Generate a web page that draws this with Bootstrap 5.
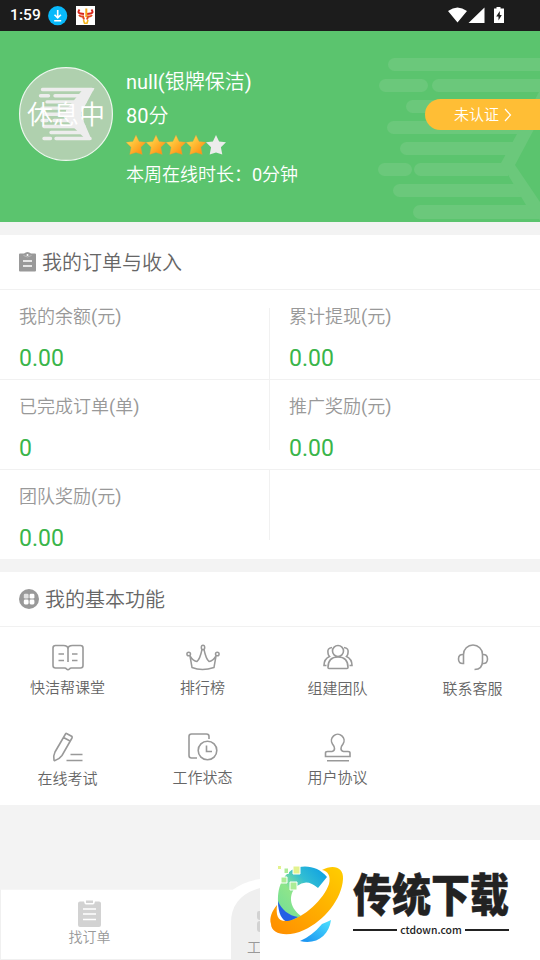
<!DOCTYPE html>
<html lang="zh-CN">
<head>
<meta charset="utf-8">
<meta name="viewport" content="width=device-width, initial-scale=1">
<title>我的</title>
<link href="https://cdn.jsdelivr.net/npm/bootstrap@5.3.0/dist/css/bootstrap.min.css" rel="stylesheet">
<style>
body{width:540px;height:960px;overflow:hidden;background:#f3f3f3;font-family:Roboto,"Noto Sans CJK SC DemiLight","Noto Sans CJK SC",sans-serif;font-weight:400;line-height:1;color:#666}
svg{display:block;flex:none}
.statusbar{height:31px;background:#1c1c1c;padding:0 35px 0 10px}
.clock{font-size:15.5px;font-weight:500;letter-spacing:.1px;width:38px;padding-top:1px}
.profile{height:191px;background:#5bc46e;padding:36px 0 0 19px}
.stripes{top:0;right:0}
.avatar{width:94px;height:94px}
.rest{font-size:26px;inset:0;padding-top:2px}
.who{font-size:20px;padding-left:13px}
.who>div{height:34px;line-height:34px;white-space:nowrap}
.who .nm{margin-top:-2px}
.who .online{font-size:18px;height:30px;line-height:30px;margin-top:5px}
.who .starrow{height:20px;margin-top:2px}
.verify{top:68px;right:0;width:115px;height:31px;border-radius:16px 0 0 16px;background:#ffbe35;font-size:15px;padding:1px 0 0 29px}
.panel{background:#fff;margin-top:13px}
.panel-title{height:55px;border-bottom:1px solid #f1f1f1;padding-left:19px;font-size:20px}
.panel-title span{padding:2px 0 0 6px}
.stat{height:90px;padding:14px 0 0 19px;font-size:18px;color:#999;position:relative}
.stat-row{border-bottom:1px solid #f1f1f1;height:90px}
.stat-row:last-child{height:89px;border:0}
.stat .lbl{line-height:26px}
.stat .val{font-size:23px;line-height:30px;color:#3ab54a;margin-top:14px}
.stat.split::after{content:"";position:absolute;right:0;top:0;width:1px;height:70px;background:#f1f1f1}
.stat.split.low::after{top:18px;height:71px}
.tool{height:90px;padding:15px 0 0;font-size:15px}
.tool span{line-height:22px;margin-top:5px}
.tool.dn span{margin-top:6px}
.tools{height:178px}
.tabs{height:71px;margin-top:84px;background:#fff;border:1px solid #f0f0f0;border-top-color:#f6f6f6}
.tab{width:177px;padding-top:10px;font-size:14px;color:#999}
.tab span{line-height:20px}
.bubble{left:220px;bottom:0}
.midtab{left:247px;bottom:4px;font-size:14px;line-height:18px;color:#999}
.brand{left:260px;top:840px;width:280px;height:120px;background:#fff;color:#222}
.brand-name{left:93px;top:36px;font:900 39px/32px "Noto Sans CJK SC",sans-serif;transform:scaleY(1.16);white-space:nowrap;-webkit-text-stroke:.4px #222}
.brand-site{left:93px;top:84px;width:156px;font:500 10.4px/12px "Noto Sans CJK SC",sans-serif;gap:3px}
.rule{height:2px;background:#222}
</style>
<script src="https://cdn.jsdelivr.net/npm/bootstrap@5.3.0/dist/js/bootstrap.bundle.min.js"></script>
</head>
<body class="position-relative">
<header class="statusbar d-flex align-items-center text-white">
  <span class="clock">1:59</span>
  <svg width="20" height="20" viewBox="0 0 20 20"><circle cx="9.700" cy="9.700" r="9.600" fill="#08b9fb"/><path d="M9.700 4v8M6.500 8.700l3.200 3.200 3.200-3.200M6.200 14.700h7" fill="none" stroke="#fff" stroke-width="1.600"/></svg>
  <svg class="ms-2" width="19" height="19" viewBox="0 0 19 19"><path fill="#fff" d="M0 0h19v19H0z"/><path d="M3.500 3.500Q1 7 4.500 7.500L8 8M15.500 3.500Q18 7 14.500 7.500L11 8" fill="none" stroke="#d8261c" stroke-width="2"/><path d="M3 9Q4.500 11 7 10.500L8 13.500M16 9Q14.500 11 12 10.500L11 13.500" fill="none" stroke="#e2471c" stroke-width="2"/><path d="M10.300 2.500V11" stroke="#f5a71c" stroke-width="2"/><path d="M7.500 14l1 3.200h2.500l1-3.200" fill="none" stroke="#f5b51c" stroke-width="1.600"/></svg>
  <svg class="ms-auto" width="57" height="18" viewBox="0 0 57 18"><path fill="#fff" d="M0 4Q9.500-3 19 4L9.500 15.500zM36.500 .5V16H20.500zM46 1.500h2.500V-.5h4v2H56v14.500H46z"/><path fill="#1c1c1c" d="M51.800 4L48.200 9.500h2.300v4L53.800 8h-2z"/></svg>
</header>

<section class="profile d-flex position-relative text-white">
  <svg class="stripes position-absolute" width="170" height="191" viewBox="370 31 170 191" fill="#6bc87b">
    <path d="M394.500 58H540v13H394.500a6.500 6.500 0 010-13zM438.500 79H540v13H438.500a6.500 6.500 0 010-13z"/>
    <rect x="379" y="79" width="49" height="13" rx="6.500"/>
    <path d="M412.500 100H540v13H412.500a6.500 6.500 0 010-13zM393.500 121H530v13H393.500a6.500 6.500 0 010-13zM406.500 142H516v13H406.500a6.500 6.500 0 010-13zM420.500 163H508v13H420.500a6.500 6.500 0 010-13zM399.500 184H522v13H399.500a6.500 6.500 0 010-13zM420 205H540v14H420a7 7 0 010-14z"/>
    <path d="M540 90V118L515 165L540 202V220L526 205L501 163L517 134z"/>
    <rect x="378" y="163" width="34" height="13" rx="6.500"/>
  </svg>
  <div class="avatar position-relative">
    <svg width="94" height="94" viewBox="19 67 94 94"><circle cx="66" cy="114" r="46.400" fill="#afd0ae" stroke="#edf7ee" stroke-width="1.200"/>
      <g stroke="#ededed" stroke-width="3.400" stroke-linecap="round"><path d="M42.500 89.500H92M40.500 95.700h8M55 95.700H88M47 101.900H85M42 108.100H82M45 114.300H80M42 120.500h5M54 120.500H82M44 126.500H84M51 132.500H86M44 138.500h6.500M56 138.500H90"/></g>
      <path fill="#ededed" d="M84 88H94.500L80.500 114L91.500 139.500H86L66 120V110z"/></svg>
    <div class="rest position-absolute d-flex align-items-center justify-content-center text-nowrap">休息中</div>
  </div>
  <div class="who">
    <div class="nm">null(银牌保洁)</div>
    <div>80分</div>
    <div class="starrow d-flex">
      <svg width="100" height="20" viewBox="0 0 100 20"><defs><linearGradient id="sg" x1="0" y1="0" x2="1" y2="1"><stop offset=".25" stop-color="#ffd044"/><stop offset=".8" stop-color="#ff9618"/></linearGradient><path id="st" d="M10 0l3.100 6.400 6.900.9-5.100 4.900 1.400 7.300L10 17.500 3.700 19.500l1.400-7.300L0 7.300l6.900-.9z"/></defs><g fill="url(#sg)" stroke="#c9a04a" stroke-width=".3"><use href="#st"/><use href="#st" x="20"/><use href="#st" x="40"/><use href="#st" x="60"/></g><use href="#st" x="80" fill="#ececec"/></svg>
    </div>
    <div class="online">本周在线时长：0分钟</div>
  </div>
  <a class="verify position-absolute d-flex align-items-center text-white text-decoration-none" href="#">未认证
    <svg class="ms-1" width="9" height="14" viewBox="0 0 9 14"><path d="M2 1l5.500 6L2 13" fill="none" stroke="#fff" stroke-width="1.200"/></svg></a>
</section>

<section class="panel">
  <div class="panel-title d-flex align-items-center">
    <svg width="17" height="20" viewBox="0 0 17 20"><path fill="#999" d="M1 1.500h4Q8.500-1.500 12 1.500h4q1 0 1 1v16q0 1-1 1H1q-1 0-1-1v-16q0-1 1-1z"/><path d="M4 9h9M4 14h9" stroke="#fff" stroke-width="1.500"/><path d="M4.500 3.500Q8.500 6.500 12.500 3.500" fill="none" stroke="#bbb"/><circle cx="8.500" cy="3" r="1" fill="#fff"/></svg>
    <span>我的订单与收入</span>
  </div>
  <div class="stat-row row g-0">
    <div class="col-6 stat split low"><div class="lbl">我的余额(元)</div><div class="val">0.00</div></div>
    <div class="col-6 stat"><div class="lbl">累计提现(元)</div><div class="val">0.00</div></div>
  </div>
  <div class="stat-row row g-0">
    <div class="col-6 stat split"><div class="lbl">已完成订单(单)</div><div class="val">0</div></div>
    <div class="col-6 stat"><div class="lbl">推广奖励(元)</div><div class="val">0.00</div></div>
  </div>
  <div class="stat-row row g-0">
    <div class="col-6 stat split"><div class="lbl">团队奖励(元)</div><div class="val">0.00</div></div>
  </div>
</section>

<section class="panel">
  <div class="panel-title d-flex align-items-center">
    <svg width="20" height="20" viewBox="0 0 20 20"><circle cx="10" cy="10" r="10" fill="#999"/><g fill="#fff"><rect x="4.800" y="4.800" width="4.800" height="4.800" rx="1.300" opacity=".7"/><rect x="10.600" y="4.800" width="4.800" height="4.800" rx="1.300"/><rect x="4.800" y="10.600" width="4.800" height="4.800" rx="1.300"/><rect x="10.600" y="10.600" width="4.800" height="4.800" rx="1.300"/></g></svg>
    <span>我的基本功能</span>
  </div>
  <div class="tools row row-cols-4 g-0">
    <div class="col tool d-flex flex-column align-items-center">
      <svg width="34" height="30" viewBox="0 0 34 30" fill="none" stroke="#999" stroke-width="1.600"><path d="M17 20V7Q17 3.500 12.500 3.500H4.500Q2 3.500 2 6V23.500Q2 26 4.500 26H13.500Q15 26 15.500 27Q17 28.500 18.500 27Q19 26 20.500 26H29.500Q32 26 32 23.500V6Q32 3.500 29.500 3.500H21.500Q17 3.500 17 7M7.500 12h5.500M7.500 18.500h5.500M21 12h5.500M21 18.500h5.500"/></svg>
      <span>快洁帮课堂</span></div>
    <div class="col tool d-flex flex-column align-items-center">
      <svg width="34" height="30" viewBox="0 0 34 30" fill="none" stroke="#999" stroke-width="1.500"><ellipse cx="17" cy="5.500" rx="1.700" ry="2.200"/><circle cx="2.700" cy="12" r="1.800"/><circle cx="31.300" cy="12" r="1.800"/><path d="M16 7.500Q14 17 11 19.500Q7 19 4 14L6 25.500Q16 29.500 28 25.500L30 14Q27 19 23 19.500Q20 17 18 7.500"/></svg>
      <span>排行榜</span></div>
    <div class="col tool dn d-flex flex-column align-items-center">
      <svg width="34" height="30" viewBox="0 0 34 30" fill="none" stroke="#999" stroke-width="1.600"><circle cx="17" cy="9" r="5.500"/><path d="M7 25.500Q7 15 17 15T27 25.500Q27 26.500 26 26.500H8Q7 26.500 7 25.500ZM11 5.500Q6 6 7 11Q7 13 8.500 14.500Q3 17 3 23.500H5.500M23 5.500Q28 6 27 11Q27 13 25.500 14.500Q31 17 31 23.500H28.500"/></svg>
      <span>组建团队</span></div>
    <div class="col tool dn d-flex flex-column align-items-center">
      <svg width="34" height="30" viewBox="0 0 34 30" fill="none" stroke="#999" stroke-width="1.600"><path d="M7.500 12.500A9.500 9.500 0 0126.500 12.500V19Q26.500 27.500 18.500 27.500M7.500 12.500Q2.500 12 2.500 17T7.500 21.500ZM26.500 12.500Q31.500 12 31.500 17T26.500 21.500"/></svg>
      <span>联系客服</span></div>
    <div class="col tool dn d-flex flex-column align-items-center">
      <svg width="34" height="30" viewBox="0 0 34 30" fill="none" stroke="#999" stroke-width="1.600"><path d="M15.500 1.500L21 4.500Q21.500 5 21 6L11 23.500Q8 27.500 4 28.500Q3 29 3 28Q2 24 4 20L14.500 2Q15 1.200 15.500 1.500ZM12.500 5.500L19 9M19.500 22.500H31.500M15.500 28.500H31.500"/></svg>
      <span>在线考试</span></div>
    <div class="col tool d-flex flex-column align-items-center">
      <svg width="34" height="30" viewBox="0 0 34 30" fill="none" stroke="#999" stroke-width="1.600"><path d="M11 26H5.500Q3 26 3 23.500V4.500Q3 2 5.500 2H20.500Q23 2 23 4.500V7M20.500 13.500V19.500H26"/><circle cx="21.500" cy="18.500" r="9.300"/></svg>
      <span>工作状态</span></div>
    <div class="col tool d-flex flex-column align-items-center">
      <svg width="34" height="30" viewBox="0 0 34 30" fill="none" stroke="#999" stroke-width="1.600"><path d="M4.500 24.500V21Q4.500 19.500 6.500 19.500H11Q13.500 19 13.500 16.500Q13.500 14.500 11.500 12A6.300 6.300 0 1122 12Q20 14.500 20 16.500Q20 19 22.500 19.500H27Q29 19.500 29 21V24.500ZM6 28.700H28"/></svg>
      <span>用户协议</span></div>
  </div>
</section>

<nav class="tabs d-flex">
  <div class="tab d-flex flex-column align-items-center">
    <svg width="23" height="27" viewBox="0 0 23 27"><path fill="#d2d2d2" d="M2 1.500H6Q6.500 4.500 8 4.500H15Q16.500 4.500 17 1.500H21Q23 1.500 23 3.500V25Q23 27 21 27H2Q0 27 0 25V3.500Q0 1.500 2 1.500ZM8 .5H15V3H8Z"/><path d="M5 9H18M5 14H18M5 19.500H18" stroke="#fff" stroke-width="1.400"/></svg>
    <span>找订单</span></div>
</nav>
<svg class="bubble position-absolute" width="40" height="82" viewBox="220 878 40 82"><path fill="#fff" d="M231 891Q244 881 260 879V900H231z"/><path fill="#efefef" d="M231 960V923Q231 896 260 888V960z"/><path fill="#d2d2d2" d="M260 911h-1q-2 0-2 2v4q0 3 3 3zM260 921q-3 0-3 3v5q0 3 3 3z"/></svg>
<div class="midtab position-absolute">工</div>

<aside class="brand position-absolute">
  <svg class="position-absolute top-0 start-0" width="90" height="120" viewBox="0 0 90 120">
    <defs><linearGradient id="bg1" x1="1" y1="0" x2="0" y2="1"><stop stop-color="#089be6"/><stop offset=".35" stop-color="#32bed3"/><stop offset=".6" stop-color="#8ee58a"/><stop offset="1" stop-color="#6cdd9a"/></linearGradient><linearGradient id="bg2" x1="1" y1="0" x2="0" y2="1"><stop stop-color="#ffce00"/><stop offset="1" stop-color="#ff8c00"/></linearGradient><linearGradient id="bg3" x1="0" y1="1" x2="1" y2="0"><stop stop-color="#168df0"/><stop offset="1" stop-color="#4de2ff"/></linearGradient></defs>
    <path fill="url(#bg1)" d="M67 37C60 28 49 25 39 27C24 31 17 46 18 62C19 74 25 82 33 82L41 76C29 67 28 54 37 46Q47 38 58 48z"/>
    <path fill="#245fe5" d="M18 61C18 73 22 81 28 82L38 77C29 76 21 69 18 61z"/>
    <path fill="url(#bg3)" d="M40 101C56 105 69 96 71 80Q67 82 62 84Q52 96 40 101z"/>
    <path fill="url(#bg2)" d="M62 30C73 24 84 27 83 39C82 59 64 81 44 90C27 98 11 94 11 84C9 78 12 71 17 65C16 75 17 82 28 81C44 78 64 59 69 44C71 36 68 31 62 30z"/>
    <path fill="#e3f28e" stroke="#fff" d="M17.500 25.500h4v4h-4zM33 26h7v8h-7z"/><path fill="#acec96" stroke="#fff" d="M24 28h4.500v5.500H24zM21 37h6v6h-6zM30 42h7v8h-7z"/>
  </svg>
  <div class="brand-name position-absolute">传统下载</div>
  <div class="brand-site position-absolute d-flex align-items-center"><span class="rule flex-fill"></span><span>ctdown.com</span><span class="rule flex-fill"></span></div>
</aside>
</body>
</html>
